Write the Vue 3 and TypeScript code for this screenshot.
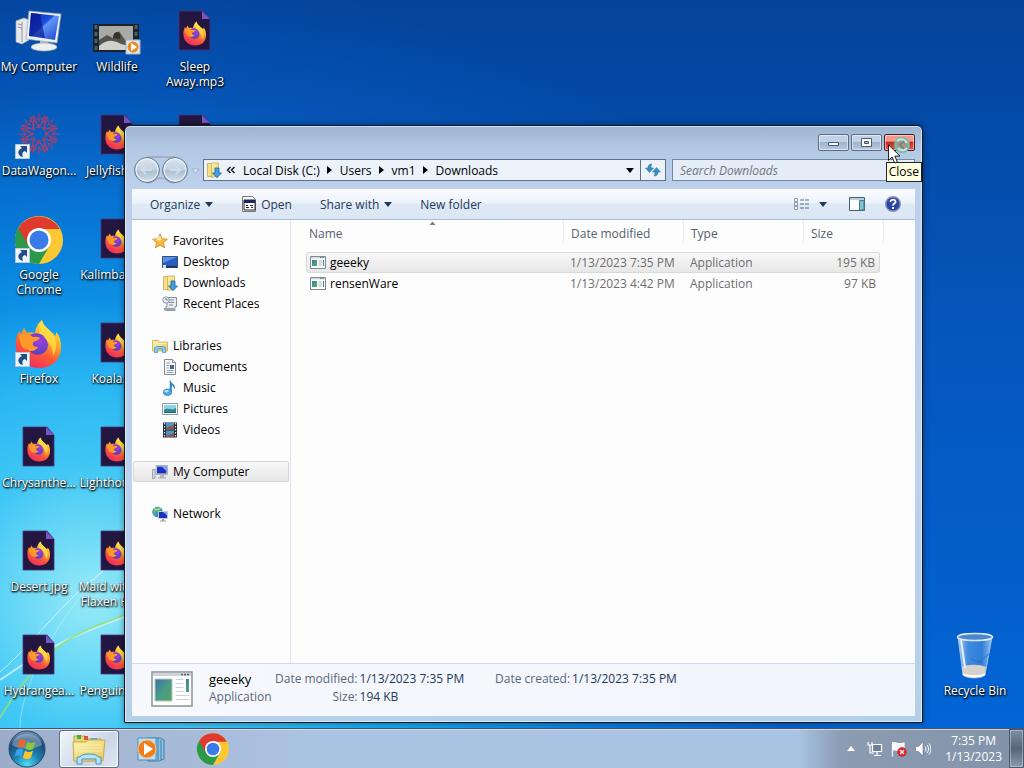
<script setup lang="ts">
import { ref } from 'vue'

interface Shortcut { label: string; icon: string; arrow?: boolean }
interface NavItem { label: string; icon: string }
interface NavGroup { head: NavItem; items: NavItem[]; selected?: boolean }
interface FileRow { name: string; modified: string; type: string; size: string }

const shortcuts: Shortcut[] = [
  { label: 'My Computer', icon: 'pc' },
  { label: 'DataWagon...', icon: 'rosette', arrow: true },
  { label: 'Google Chrome', icon: 'chrome-lg', arrow: true },
  { label: 'Firefox', icon: 'firefox', arrow: true },
  { label: 'Chrysanthe...', icon: 'ffdoc' },
  { label: 'Desert.jpg', icon: 'ffdoc' },
  { label: 'Hydrangea...', icon: 'ffdoc' },
  { label: 'Wildlife', icon: 'wildlife' },
  { label: 'Jellyfish.jpg', icon: 'ffdoc' },
  { label: 'Kalimba.mp3', icon: 'ffdoc' },
  { label: 'Koala.jpg', icon: 'ffdoc' },
  { label: 'Lighthouse....', icon: 'ffdoc' },
  { label: 'Maid with the Flaxen Hair...', icon: 'ffdoc' },
  { label: 'Penguins.jp...', icon: 'ffdoc' },
  { label: 'Sleep Away.mp3', icon: 'ffdoc' },
  { label: 'Tulips.jpg', icon: 'ffdoc' },
]

const groups: NavGroup[] = [
  {
    head: { label: 'Favorites', icon: 'star' },
    items: [
      { label: 'Desktop', icon: 'desktop' },
      { label: 'Downloads', icon: 'downloads' },
      { label: 'Recent Places', icon: 'recent' },
    ],
  },
  {
    head: { label: 'Libraries', icon: 'libraries' },
    items: [
      { label: 'Documents', icon: 'documents' },
      { label: 'Music', icon: 'music' },
      { label: 'Pictures', icon: 'pictures' },
      { label: 'Videos', icon: 'videos' },
    ],
  },
  { head: { label: 'My Computer', icon: 'pc-sm' }, items: [], selected: true },
  { head: { label: 'Network', icon: 'network' }, items: [] },
]

const files: FileRow[] = [
  { name: 'geeeky', modified: '1/13/2023 7:35 PM', type: 'Application', size: '195 KB' },
  { name: 'rensenWare', modified: '1/13/2023 4:42 PM', type: 'Application', size: '97 KB' },
]

const crumbs = ['Local Disk (C:)', 'Users', 'vm1', 'Downloads']
const selected = ref('geeeky')
const query = ref('')
const petals = [0, 45, 90, 135, 180, 225, 270, 315]
</script>

<template>
  <div class="screen">
    <svg class="defs" aria-hidden="true">
      <defs>
        <linearGradient id="gFire" x1="0.8" y1="0" x2="0.3" y2="1">
          <stop offset="0" stop-color="#fff04a" /><stop offset="0.35" stop-color="#ffb02a" />
          <stop offset="0.65" stop-color="#ff5a36" /><stop offset="1" stop-color="#ee2a62" />
        </linearGradient>
        <radialGradient id="gGlobe" cx="0.6" cy="0.3" r="0.8">
          <stop offset="0" stop-color="#a03be0" /><stop offset="1" stop-color="#4b45b8" />
        </radialGradient>
        <linearGradient id="gScreen" x1="0" y1="0" x2="1" y2="1">
          <stop offset="0" stop-color="#0a22b0" /><stop offset="0.45" stop-color="#1c4fe0" />
          <stop offset="0.5" stop-color="#5f97f5" /><stop offset="1" stop-color="#1c3fd0" />
        </linearGradient>
        <linearGradient id="gFolder" x1="0" y1="0" x2="1" y2="1">
          <stop offset="0" stop-color="#fdf3b0" /><stop offset="1" stop-color="#e8c95c" />
        </linearGradient>
        <radialGradient id="gOrb" cx="0.5" cy="0.95" r="0.95">
          <stop offset="0" stop-color="#4fe0f8" /><stop offset="0.4" stop-color="#1d7fae" />
          <stop offset="0.75" stop-color="#1a4a78" /><stop offset="1" stop-color="#7f9dbb" />
        </radialGradient>
        <linearGradient id="gBin" x1="0" y1="0" x2="1" y2="0">
          <stop offset="0" stop-color="#c5dcf3" stop-opacity="0.9" /><stop offset="0.3" stop-color="#5c9ce4" stop-opacity="0.7" />
          <stop offset="0.7" stop-color="#4188de" stop-opacity="0.7" /><stop offset="1" stop-color="#b5d4f3" stop-opacity="0.9" />
        </linearGradient>
        <linearGradient id="gNav" x1="0" y1="0" x2="0" y2="1">
          <stop offset="0" stop-color="#dde7f0" /><stop offset="0.45" stop-color="#c6d4e1" />
          <stop offset="0.55" stop-color="#adbfd1" /><stop offset="1" stop-color="#d5e3f0" />
        </linearGradient>
        <linearGradient id="gPic" x1="0" y1="0" x2="1" y2="1">
          <stop offset="0" stop-color="#3a70a8" /><stop offset="0.5" stop-color="#4b9a88" /><stop offset="1" stop-color="#57a562" />
        </linearGradient>
      </defs>

      <symbol id="firefox" viewBox="0 0 48 48">
        <path fill="url(#gFire)" d="M1 27C0 20 2 15 4 11l2 3 3-6 3 5c2-1 5-1 8 0 1-6 3-10 7-13 1 6 6 8 9 12 2 1 3 2 4 4 1-1 1-2 1-4 4 4 5 9 5 15 0 13-9 21-22 21S1 38 1 27z" />
        <path fill="#ffe04a" opacity="0.75" d="M27 0c1 6 6 8 9 12 6 7 7 16 2 24 0-9-4-15-11-18-4-5-4-13 0-18z" />
        <circle cx="23" cy="25" r="10" fill="url(#gGlobe)" />
        <path fill="#ff9a2a" d="M4 16c4-3 8-3 12-1 3 0 5 1 9 3-2 3-6 3-7 5-1 3 2 4 5 4-3 5-8 5-11 2-3 2-7-4-8-13z" />
        <path fill="#7b3fd0" d="M15 15c5-3 11-2 15 2-4-1-8 0-12 0z" />
      </symbol>
      <symbol id="ffdoc" viewBox="0 0 48 48">
        <path d="M8 3h24l7 8v31H8z" fill="#231640" stroke="#44357e" stroke-width="0.8" />
        <path d="M31 3l8 8h-8z" fill="#7b55c8" />
        <use href="#firefox" x="12" y="13" width="24" height="25" />
      </symbol>
      <symbol id="chrome" viewBox="0 0 48 48">
        <circle cx="24" cy="24" r="24" fill="#fcc934" />
        <path d="M24 24L3.200 12A24 24 0 0 0 24 48L34.400 30z" fill="#2a9a4a" />
        <path d="M24 13h20.800A24 24 0 0 0 3.200 12L13.600 30 24 24z" fill="#e03a2e" />
        <circle cx="24" cy="24" r="12" fill="#fff" />
        <circle cx="24" cy="24" r="9.500" fill="#3a7bea" />
      </symbol>
      <symbol id="chrome-lg" viewBox="0 0 48 48">
        <use href="#chrome" x="0" y="0" width="48" height="48" />
      </symbol>
      <symbol id="rosette" viewBox="0 0 48 48">
        <g fill="none" stroke="#c8385c" stroke-width="0.8" stroke-dasharray="4 1">
          <g v-for="a in petals" :key="a" :transform="`rotate(${a} 24 22)`">
            <path d="M24 14L15 5l9 3 9-3zM15 5l5 13M33 5l-5 13M24 1v9" />
            <circle cx="24" cy="9" r="4" />
          </g>
          <circle cx="24" cy="22" r="7" />
        </g>
      </symbol>
      <symbol id="pc" viewBox="0 0 48 48">
        <path d="M1 13l8-3 5 2v20l-7 4-6-2z" fill="#e6e8ea" stroke="#a8b0b8" stroke-width="0.700" />
        <path d="M3 16l4 1M3 19l4 1M7 14v20" stroke="#8f999f" stroke-width="1" fill="none" />
        <path d="M25 32h8l1 8h-9z" fill="#b8bfc6" />
        <ellipse cx="29" cy="39" rx="13" ry="4" fill="#eceff1" stroke="#a5adb5" stroke-width="0.7" />
        <path d="M14 3l32 3-4 29-31-4z" fill="#eef1f4" stroke="#9aa7b5" stroke-width="0.7" />
        <path d="M16 5l28 3-4 24-26-4z" fill="url(#gScreen)" />
        <path d="M16 5l9 1 5 24-16-2z" fill="#08158a" opacity="0.65" />
      </symbol>
      <symbol id="wildlife" viewBox="0 0 48 48">
        <path d="M0 16h46v28H0z" fill="#1b2228" />
        <path d="M6 18h34v24H6z" fill="#a9a9a6" />
        <path d="M6 42V32l8-5 6 3 6-7 6 9 8 3v7z" fill="#54544f" />
        <path d="M6 38c8-7 14-6 20-3s10 2 14 1v6H6z" fill="#d2d1cc" />
        <path d="M20 30c0-4 2-6 4-6s4 3 3 7z" fill="#34332f" />
        <path d="M3 17v26M43 17v26" stroke="#46606c" stroke-width="3" stroke-dasharray="4 3" />
        <path d="M33 32h14v14H33z" fill="#dde8f2" stroke="#9fb4c8" />
        <circle cx="40" cy="39" r="5.500" fill="#ef8a1f" />
        <path d="M38 35l6 4-6 4z" fill="#fff" />
      </symbol>
      <symbol id="bin" viewBox="0 0 48 48">
        <path d="M7 5l5 38c4 4 19 4 22 0l7-38z" fill="url(#gBin)" stroke="#a9cdf0" stroke-width="0.8" />
        <path d="M11 35c6-3 18-3 24 0l-1 8c-4 4-18 4-22 0z" fill="#d8d0cc" />
        <path d="M12 42c5 3 17 3 22 0" stroke="#fff" stroke-width="2" fill="none" />
        <path d="M38 22l-10 8-8-3" stroke="#2f6cba" stroke-width="1" fill="none" />
        <path d="M10 8l4 28" stroke="#e5f2fc" stroke-width="2" />
        <ellipse cx="24" cy="5" rx="17.500" ry="3.500" fill="#4a86c8" stroke="#dceaf5" stroke-width="1.500" />
      </symbol>
      <symbol id="star" viewBox="0 0 16 16">
        <path d="M8 .8l2.100 4.900 5.300.500-4 3.500 1.200 5.200L8 12.200l-4.600 2.700 1.200-5.200-4-3.500 5.300-.500z" fill="#fcb73a" stroke="#d08a28" stroke-width="0.8" />
        <path d="M8 2.500l1.500 4L8 8 4 7z" fill="#ffe9a8" />
      </symbol>
      <symbol id="desktop" viewBox="0 0 16 16">
        <path d="M.5 2.500h15v11H.5z" fill="#2a5cc0" stroke="#3a4f78" />
        <path d="M1 3h14L1 9z" fill="#5a92e8" />
        <path d="M1 12h14v1.500H1z" fill="#1d2f58" /><path d="M1 11h3v3H1z" fill="#cfe0f5" />
      </symbol>
      <symbol id="downloads" viewBox="0 0 16 16">
        <path d="M1.500 1.500h5v13h-5z" fill="#f6e08a" stroke="#c8a848" stroke-width="0.8" />
        <path d="M5.500 1h7v13l-7 1.500z" fill="url(#gFolder)" stroke="#cdae55" stroke-width="0.8" />
        <path d="M9 6h4v5h2.500l-4.500 4.700L6.500 11H9z" fill="#3f9fe0" stroke="#1f66a8" stroke-width="0.8" />
      </symbol>
      <symbol id="recent" viewBox="0 0 16 16">
        <path d="M5 1.500h9.500v9H13v4H4v-4h1z" fill="#e8ecef" stroke="#87919b" />
        <path d="M7 4h5M7 6.500h5M7 9h4" stroke="#7d8a96" />
        <path d="M2 12h10v2.500H2z" fill="#9aa5b0" />
        <circle cx="4" cy="4" r="3.200" fill="#f5f7f9" stroke="#8a98a8" /><path d="M4 2v2h2" stroke="#506070" fill="none" stroke-width="0.8" />
      </symbol>
      <symbol id="libraries" viewBox="0 0 16 16">
        <path d="M.5 2.500h6l1 1.500h8v9H.5z" fill="url(#gFolder)" stroke="#c9ab55" stroke-width="0.8" />
        <path d="M1 5.500h14" stroke="#f9f0c0" />
        <path d="M2.500 14.500V10c0-2 11-2 11 0v4.500h-3V11h-5v3.500z" fill="#8ccdf0" stroke="#4596c5" stroke-width="0.8" />
      </symbol>
      <symbol id="documents" viewBox="0 0 16 16">
        <path d="M2.500.5h8l3 3v12h-11z" fill="#fbfcfd" stroke="#7f8a95" />
        <path d="M10.500.5v3h3" fill="#d5dde5" stroke="#7f8a95" />
        <path d="M4.500 4h4M4.500 6.500h3M4.500 9h3M4.500 11.500h7M4.500 13.500h7" stroke="#8aa0b5" />
        <path d="M8 6h4v4H8z" fill="#4b6580" />
      </symbol>
      <symbol id="music" viewBox="0 0 16 16">
        <path d="M8 .5c1 3 5 3.500 4.500 8-1-2.500-2-3-3-3V12H8z" fill="#2f8fd0" stroke="#1a6aa8" stroke-width="0.500" />
        <ellipse cx="5.500" cy="12.200" rx="4.200" ry="3.200" fill="#49a8e2" stroke="#1f74b0" stroke-width="0.6" />
        <ellipse cx="4.500" cy="11.200" rx="2" ry="1.200" fill="#b4e0f8" />
      </symbol>
      <symbol id="pictures" viewBox="0 0 16 16">
        <path d="M.5 2.500h15v11H.5z" fill="#fff" stroke="#8a98a5" />
        <path d="M2 4h12v8H2z" fill="#8fd0f0" /><path d="M2 9c4-3 7 1 12-2v5H2z" fill="#2f8a80" /><path d="M2 11h12v1H2z" fill="#1f5f78" />
      </symbol>
      <symbol id="videos" viewBox="0 0 16 16">
        <path d="M1 .5h14v15H1z" fill="#222a35" /><path d="M4 1h8v6.500H4zM4 8.500h8V15H4z" fill="#4b93c8" />
        <path d="M4 6c3-3 5 0 8-4v5.500H4zM4 14c3-3 5 0 8-4v5H4z" fill="#8a5a48" />
        <path d="M2.500 1v14M13.500 1v14" stroke="#dfe8f0" stroke-width="1.200" stroke-dasharray="1.500 1.500" />
      </symbol>
      <symbol id="pc-sm" viewBox="0 0 16 16">
        <path d="M.5 5.500h2.500v9H.5z" fill="#d8dce0" stroke="#8a939c" stroke-width="0.8" />
        <path d="M4 1.500h11.500v9H4z" fill="#e8ebee" stroke="#8f9aa5" stroke-width="0.700" />
        <path d="M5 2.500h9.500v7H5z" fill="#1c2fc0" /><path d="M9.500 2.500h5V7z" fill="#7fa8f5" />
        <path d="M8 10.500h4V13h2v1.500H6V13h2z" fill="#b0b7be" />
      </symbol>
      <symbol id="network" viewBox="0 0 16 16">
        <circle cx="5.500" cy="6" r="5.300" fill="#3f8fd0" /><path d="M1 4c3-4 7-4 9-1-3 0-2 3-5 3S4 10 3 10 1 7 1 4z" fill="#58b868" />
        <path d="M2 2.500c2 2 5 1 7-1" stroke="#d5f0f5" fill="none" />
        <path d="M6.500 5.500h9v7h-9z" fill="#1c32b8" stroke="#c5cdd8" /><path d="M11 6h4v3.500z" fill="#7aa5f0" />
        <path d="M10 13h2v1.500h2v1H8v-1h2z" fill="#98a2b0" />
      </symbol>
      <symbol id="exe" viewBox="0 0 16 16">
        <path d="M.5 1.500h15v12H.5z" fill="#fcfdfd" stroke="#7f8b94" />
        <path d="M1 2h14v1.500H1z" fill="#d3dade" /><path d="M10 2.500h4" stroke="#68757f" stroke-dasharray="1 .6" />
        <path d="M2 5h5v6H2z" fill="url(#gPic)" /><path d="M8.500 6h3.500M8.500 8h3.500M8.500 10h3.500" stroke="#b4bdc3" /><path d="M13.500 5v6" stroke="#507f80" />
      </symbol>
      <symbol id="exe-lg" viewBox="0 0 42 36">
        <path d="M1 1h40v34H1z" fill="#fff" stroke="#8a9296" stroke-width="1.500" />
        <path d="M2 2h38v3H2z" fill="#cdd4d8" /><path d="M30 3.500h9" stroke="#566068" stroke-width="1.500" stroke-dasharray="2 1" />
        <path d="M4 8h17v22H4z" fill="url(#gPic)" stroke="#b7c5c5" />
        <path d="M24.500 8.500h8M24.500 12.500h8M24.500 16.500h8M24.500 20.500h8M24.500 24.500h14M24.500 28.500h14" stroke="#cbd2d6" />
        <path d="M35 8h3v13h-3z" fill="url(#gPic)" />
      </symbol>
      <symbol id="explorer" viewBox="0 0 36 32">
        <path d="M3 3h11l2 3h14v22H3z" fill="#e9d478" stroke="#c0a040" />
        <path d="M6 2h4v4H6z" fill="#4aa850" /><path d="M13 3h4v4h-4z" fill="#d8583c" /><path d="M20 5h6v3h-6z" fill="#6aa5d8" />
        <path d="M2 9h13l2-2h17l-2 21H3z" fill="url(#gFolder)" stroke="#c9ab4a" />
        <path d="M4 12h27M4 15h27M4 18h27" stroke="#f8eeb0" />
        <path d="M6 31V24h3c0-4 18-4 18 0h3v7h-5v-5H11v5z" fill="#b5e2f7" stroke="#4596c5" />
      </symbol>
      <symbol id="wmp" viewBox="0 0 30 28">
        <path d="M12 3h12l4 2v19l-5 2H12z" fill="#8cc4e6" stroke="#3f7fa8" />
        <path d="M22 3v22M25 5v20" stroke="#3f7fa8" /><path d="M2 3h18v22H2z" fill="#bfe0f2" stroke="#4a8fb8" />
        <circle cx="11" cy="14" r="9" fill="#ee7d1c" stroke="#f7c08a" /><path d="M8 8l9 6-9 6z" fill="#fff" />
      </symbol>
    </svg>

    <main class="desktop">
      <svg class="streaks" viewBox="0 0 260 260" fill="none" aria-hidden="true">
        <path d="M0 212C50 178 90 152 260 110" stroke="#dff8ff" stroke-width="2" opacity="0.7" />
        <path d="M0 204C40 170 70 120 130 85" stroke="#e8fbff" stroke-width="1" opacity="0.7" />
        <path d="M20 260C20 220 60 130 150 60" stroke="#c8f2ff" stroke-width="1" opacity="0.5" />
        <path d="M0 250C20 215 45 190 62 176C82 162 100 156 150 138" stroke="#8fe07a" stroke-width="2" opacity="0.85" />
      </svg>

      <section class="shortcuts" aria-label="Desktop">
        <a v-for="s in shortcuts" :key="s.label" href="#" class="shortcut">
          <span class="pic">
            <svg class="i48"><use :href="`#${s.icon}`" /></svg>
            <svg v-if="s.arrow" class="link-arrow" viewBox="0 0 15 15">
              <path d="M.5.5h14v14H.5z" fill="#eef4fa" stroke="#b5c8da" />
              <path d="M5 2h7v7l-2-2c-3 1-3 3-2 6C2 12 2 6 7 4z" fill="#1f4c8a" />
            </svg>
          </span>
          <span class="caption">{{ s.label }}</span>
        </a>
      </section>

      <a href="#" class="shortcut bin">
        <svg class="i48"><use href="#bin" /></svg>
        <span class="caption">Recycle Bin</span>
      </a>

      <section class="window" aria-label="Downloads">
        <header class="titlebar">
          <button class="wbtn" aria-label="Minimize"><svg viewBox="0 0 13 9"><path d="M1.500 4.500h10v3h-10z" fill="#fff" stroke="#4b5a70" /></svg></button>
          <button class="wbtn" aria-label="Maximize"><svg viewBox="0 0 13 9"><path d="M1.500.5h10v8h-10z" fill="#fff" stroke="#4b5a70" /><path d="M4.500 3.500h4v2h-4z" fill="#9fb4d0" stroke="#4b5a70" /></svg></button>
          <button class="wbtn close" aria-label="Close"></button>
        </header>

        <div class="navbar">
          <svg class="travel" viewBox="0 0 68 28" aria-label="Back and forward">
            <path d="M14 1h28M14 27c8 0 8-5 14-5s6 5 14 5" stroke="#8699ae" fill="none" />
            <circle cx="14" cy="14" r="12.500" fill="url(#gNav)" stroke="#67798d" />
            <circle cx="42" cy="14" r="12.500" fill="url(#gNav)" stroke="#67798d" />
            <circle cx="14" cy="14" r="11" fill="none" stroke="#edf5fb" /><circle cx="42" cy="14" r="11" fill="none" stroke="#edf5fb" />
            <path d="M19 14H9l4-4M9 14l4 4M37 14h10l-4-4M47 14l-4 4" stroke="#d0deeb" stroke-width="2" fill="none" />
            <path d="M59 13h7l-3.500 4z" fill="#dbe8f5" stroke="#94a8be" stroke-width="0.800" />
          </svg>
          <div class="address">
            <svg class="i16 lead"><use href="#downloads" /></svg>
            <svg class="chev" viewBox="0 0 10 8"><path d="M4.500 1l-3 3 3 3M8.500 1l-3 3 3 3" fill="none" stroke="#111" stroke-width="1.400" /></svg>
            <template v-for="(c, i) in crumbs" :key="c">
              <svg v-if="i > 0" class="sep" viewBox="0 0 5 8"><path d="M0 0l5 4-5 4z" /></svg>
              <button class="crumb">{{ c }}</button>
            </template>
            <button class="drop" aria-label="Previous locations"><svg viewBox="0 0 8 5"><path d="M0 0h8L4 5z" /></svg></button>
            <button class="refresh" aria-label="Refresh">
              <svg viewBox="0 0 16 16"><path d="M7 2C4 2 3 3.500 3 6H.5L4.500 10.500 8.500 6H6c0-2 0-3 1-4zM9 14c3 0 4-1.500 4-4h2.500L11.500 5.500 7.500 10H10c0 2 0 3-1 4z" fill="#3592c4" stroke="#256a9a" stroke-width="0.500" /></svg>
            </button>
          </div>
          <input v-model="query" class="search" type="search" aria-label="Search Downloads" placeholder="Search Downloads">
        </div>

        <div class="body">
          <div class="toolbar">
            <button class="tool organize">Organize<svg class="tri" viewBox="0 0 8 5"><path d="M0 0h8L4 5z" /></svg></button>
            <button class="tool open">
              <svg class="i16" viewBox="0 0 16 16"><path d="M1.500.5h10l3 3v12h-13z" fill="#fff" stroke="#777" /><path d="M3 4h11v10H3z" fill="#fff" stroke="#222" /><path d="M3 4h11v3H3z" fill="#1b2460" /><path d="M5 9.500h2M9 9.500h3M5 11.500h3M10 11.500h2" stroke="#222" /></svg>Open
            </button>
            <button class="tool share">Share with<svg class="tri" viewBox="0 0 8 5"><path d="M0 0h8L4 5z" /></svg></button>
            <button class="tool">New folder</button>
            <span class="grow"></span>
            <button class="tool view" aria-label="Change your view">
              <svg class="i16" viewBox="0 0 16 16"><path d="M.5 2.500h3v3h-3zM.5 6.500h3v3h-3zM.5 10.500h3v3h-3z" fill="#fff" stroke="#8b98ac" /><path d="M6 4h10M6 8h10M6 12h10" stroke="#5d6c84" stroke-dasharray="4 1" /></svg>
              <svg class="tri" viewBox="0 0 8 5"><path d="M0 0h8L4 5z" /></svg>
            </button>
            <button class="tool" aria-label="Show the preview pane">
              <svg class="i16" viewBox="0 0 16 16"><path d="M.5 1.500h15v13H.5z" fill="#fff" stroke="#3f6078" /><path d="M1 2h14v2H1z" fill="#b8d0dc" /><path d="M10.500 4.500h4.500v9.500h-4.500z" fill="#7fc4cc" stroke="#43808c" /></svg>
            </button>
            <button class="tool" aria-label="Get help">
              <svg class="i16" viewBox="0 0 16 16"><circle cx="8" cy="8" r="7.300" fill="#2c46a4" stroke="#8a95b8" stroke-width="1.400" /><path d="M5.500 6c0-3.500 5.500-3 5 0-.3 1.600-2.500 1.500-2.500 3.500M8 11v2" fill="none" stroke="#fff" stroke-width="1.800" /></svg>
            </button>
          </div>

          <div class="panes">
            <nav class="tree" aria-label="Places">
              <ul v-for="g in groups" :key="g.head.label">
                <li><a href="#" class="place" :class="{ current: g.selected }"><svg class="i16"><use :href="`#${g.head.icon}`" /></svg>{{ g.head.label }}</a></li>
                <li v-for="n in g.items" :key="n.label"><a href="#" class="place child"><svg class="i16"><use :href="`#${n.icon}`" /></svg>{{ n.label }}</a></li>
              </ul>
            </nav>

            <div class="list">
              <table>
                <thead>
                  <tr>
                    <th class="c-name" scope="col" aria-sort="ascending">Name<svg class="sort" viewBox="0 0 7 4"><path d="M.5 4L3.500.5l3 3.500z" fill="#6f8294" /></svg></th>
                    <th class="c-mid" scope="col">Date modified</th>
                    <th class="c-mid" scope="col">Type</th>
                    <th class="c-size" scope="col">Size</th>
                  </tr>
                </thead>
                <tbody>
                  <tr v-for="f in files" :key="f.name" :class="{ on: f.name === selected }" @click="selected = f.name">
                    <td class="fname"><svg class="i16"><use href="#exe" /></svg>{{ f.name }}</td>
                    <td>{{ f.modified }}</td>
                    <td>{{ f.type }}</td>
                    <td class="fsize">{{ f.size }}</td>
                  </tr>
                </tbody>
              </table>
            </div>
          </div>

          <footer class="details">
            <svg class="thumb"><use href="#exe-lg" /></svg>
            <div class="what"><strong>geeeky</strong><span>Application</span></div>
            <dl>
              <dt>Date modified:</dt><dd>1/13/2023 7:35 PM</dd>
              <dt>Size:</dt><dd>194 KB</dd>
            </dl>
            <dl>
              <dt>Date created:</dt><dd>1/13/2023 7:35 PM</dd>
            </dl>
          </footer>
        </div>

        <svg class="busy" viewBox="0 0 18 18" aria-hidden="true">
          <circle cx="9" cy="9" r="6.500" fill="#9bb8ac" fill-opacity="0.7" stroke="#74b8a8" stroke-width="3" />
          <path d="M4 5c3-3 8-2 10 2M14 12c-2 3-7 3-9 0" stroke="#c8eadf" stroke-width="2" fill="none" />
          <path d="M11 5L7 9l4 4" stroke="#5e8a88" stroke-width="1.500" fill="none" />
        </svg>
        <div class="tip" role="tooltip">Close</div>
        <svg class="cursor" viewBox="0 0 13 20" aria-hidden="true"><path d="M.5.800v15.700l3.700-3.500 2.500 6 2.600-1.100-2.500-5.800h5.200z" fill="#fff" stroke="#111" stroke-width="0.900" /></svg>
      </section>
    </main>

    <footer class="taskbar">
      <button class="start" aria-label="Start">
        <svg viewBox="0 0 38 38">
          <circle cx="19" cy="19" r="18" fill="url(#gOrb)" stroke="#25486b" />
          <path d="M4 15C7 0 31 0 34 15c-9 5-21 5-30 0z" fill="#fff" opacity="0.3" />
          <path d="M11 11c3-2 5-2 7 0l-2 7c-2-2-5-2-7 0z" fill="#f0642c" />
          <path d="M19.500 11.500c3 2 5 2 8 0l-2 7c-3 2-5 2-8 0z" fill="#8cc63a" />
          <path d="M8.500 20c3-2 5-2 7 0l-2 7c-2-2-5-2-7 0z" fill="#3aa0e8" />
          <path d="M17 20.500c3 2 5 2 8 0l-2 7c-3 2-5 2-8 0z" fill="#fcc52c" />
        </svg>
      </button>
      <button class="task active" aria-label="Windows Explorer"><svg class="t36"><use href="#explorer" /></svg></button>
      <button class="task" aria-label="Windows Media Player"><svg class="t30"><use href="#wmp" /></svg></button>
      <button class="task" aria-label="Google Chrome"><svg class="t32"><use href="#chrome" /></svg></button>
      <span class="grow"></span>
      <div class="tray">
        <button class="up" aria-label="Show hidden icons"><svg viewBox="0 0 8 5"><path d="M0 5h8L4 0z" fill="#fff" /></svg></button>
        <button aria-label="Network"><svg class="i16" viewBox="0 0 16 16"><path d="M5.500 3.500h9v7h-9z" fill="#6f8096" stroke="#fff" stroke-width="1.200" /><path d="M10 11v3M7 14.500h7M1 1v3h4V1M3 4v8h4" stroke="#fff" fill="none" stroke-width="1.200" /></svg></button>
        <button aria-label="Action Center"><svg class="i16" viewBox="0 0 16 16"><path d="M1.500 1v14.500M2 2c4-1 5 2 11 0v7c-5 2-7-1-11 0z" fill="#f5f7fa" stroke="#fff" stroke-width="1.200" /><circle cx="11" cy="11" r="4.700" fill="#d8222c" /><path d="M9 9l4 4M13 9l-4 4" stroke="#fff" stroke-width="1.300" /></svg></button>
        <button aria-label="Volume"><svg class="i16" viewBox="0 0 16 16"><path d="M.5 5.500h3L8 1v14l-4.500-4.500h-3z" fill="#fff" stroke="#56657a" stroke-width="0.500" /><path d="M10 5.500c1.200 1.500 1.200 3.500 0 5M12 4c2 2.500 2 5.500 0 8M14 2.500c2.500 3.500 2.500 7.500 0 11" stroke="#fff" fill="none" /></svg></button>
      </div>
      <time class="clock"><span>7:35 PM</span><span>1/13/2023</span></time>
      <button class="peek" aria-label="Show desktop"></button>
    </footer>
  </div>
</template>

<style>
html, body { margin: 0; height: 100%; overflow: hidden; }
</style>

<style scoped>
.screen {
  height: 100vh;
  display: flex;
  flex-direction: column;
  font: 12px/15px "Open Sans", "Noto Sans", sans-serif;
  color: #000;
  background:
    radial-gradient(circle 300px at 9% 78%, rgba(165, 240, 248, 0.9), rgba(90, 215, 248, 0.6) 45%, transparent),
    radial-gradient(ellipse 860px 680px at 8% 84%, #20b6f2 0%, #14a8ef 38%, rgba(8, 130, 224, 0.8) 62%, rgba(6, 100, 205, 0.4) 82%, transparent 100%),
    linear-gradient(180deg, #04439b 0%, #0557bd 45%, #0266d8 100%);
}
.defs { position: absolute; width: 0; height: 0; }
button { font: inherit; color: inherit; background: none; border: 0; padding: 0; margin: 0; }
a { color: inherit; text-decoration: none; }
svg { display: block; flex: none; }
.i16 { width: 16px; height: 16px; }
.i48 { width: 48px; height: 48px; }
.grow { flex: 1; }

.desktop { position: relative; flex: 1; min-height: 0; }
.streaks { position: absolute; left: 0; bottom: 0; width: 260px; height: 260px; }
.shortcuts {
  position: relative;
  display: grid;
  grid-auto-flow: column;
  grid-template-rows: repeat(7, 104px);
  grid-auto-columns: 78px;
  width: max-content;
}
.shortcut {
  display: flex;
  flex-direction: column;
  align-items: center;
  gap: 3px;
  padding: 8px 0 0;
  color: #fff;
  text-align: center;
  text-shadow: 1px 1px 2px #000, 0 1px 2px #000;
}
.pic { position: relative; }
.link-arrow { position: absolute; left: 0; bottom: 1px; width: 15px; height: 15px; }
.caption { max-width: 78px; }
.bin { position: absolute; right: 10px; bottom: 30px; width: 78px; }

.window {
  position: absolute;
  inset: 125px 101px 5px 124px;
  display: flex;
  flex-direction: column;
  padding: 0 7px 6px;
  border: 1px solid #10161f;
  border-radius: 6px 6px 0 0;
  background: linear-gradient(180deg, #9db5d0 0, #b3c9e4 24px, #bcd0ec 60px, #bcd1ec 60%, #b4d0e8 100%);
  box-shadow: inset 0 0 0 1px rgba(235, 245, 255, 0.7), 0 0 6px rgba(0, 0, 0, 0.4);
}
.titlebar { display: flex; justify-content: flex-end; gap: 2px; padding: 8px 0 0; height: 23px; }
.wbtn {
  width: 31px;
  height: 17px;
  display: flex;
  align-items: center;
  justify-content: center;
  border: 1px solid #5c6c84;
  border-radius: 2px;
  background: linear-gradient(180deg, #c0d1e8 0 45%, #a0b3cc 50%, #b7cae4);
  box-shadow: inset 0 0 0 1px rgba(255, 255, 255, 0.5);
}
.wbtn svg { width: 13px; height: 9px; }
.close { border-color: #4e1a20; background: linear-gradient(180deg, #f09a90 0 40%, #c82a20 50%, #e8574a); }

.navbar { display: flex; align-items: center; height: 26px; padding-left: 1px; margin-bottom: 6px; }
.travel { width: 68px; height: 28px; margin-right: 2px; }
.address {
  flex: 1;
  display: flex;
  align-items: center;
  height: 20px;
  border: 1px solid #5d7288;
  background: #ebf2fa;
}
.lead { margin: 0 4px 0 2px; }
.chev { width: 10px; height: 8px; margin-right: 7px; }
.sep { width: 5px; height: 8px; margin: 0 8px 0 7px; }
.drop { margin-left: auto; padding: 0 6px; }
.drop svg { width: 8px; height: 5px; }
.refresh { align-self: stretch; width: 25px; border-left: 1px solid #5d7288; padding-left: 4px; }
.refresh svg { width: 16px; height: 16px; }
.search {
  width: 243px;
  height: 22px;
  box-sizing: border-box;
  margin: 0 0 0 6px;
  padding: 0 7px;
  border: 1px solid #7389a2;
  border-radius: 0;
  background: #e4edf8;
  font: inherit;
  appearance: none;
  outline: 0;
}
.search::placeholder { color: #71767e; font-style: italic; opacity: 1; }

.body { flex: 1; min-height: 0; display: flex; flex-direction: column; background: #fdfdfe; }
.toolbar {
  display: flex;
  align-items: center;
  height: 30px;
  padding: 0 14px 0 18px;
  border-bottom: 1px solid #a9bdd6;
  background: linear-gradient(180deg, #fafcfe 0%, #edf3fb 45%, #dfe8f5 52%, #dce7f5 100%);
  color: #1e395b;
}
.tool { display: flex; align-items: center; white-space: nowrap; }
.tri { width: 8px; height: 5px; margin-left: 5px; fill: #1e395b; }
.organize, .open, .share { margin-right: 28px; }
.open { gap: 4px; }
.view { gap: 4px; margin-right: 2px; }
.toolbar > .tool:nth-last-child(-n+2) { margin-left: 20px; }

.panes { flex: 1; min-height: 0; display: flex; }
.tree { width: 158px; padding-top: 10px; border-right: 1px solid #dbe6f3; }
.tree ul { list-style: none; margin: 0 0 21px; padding: 0; }
.place {
  display: flex;
  align-items: center;
  gap: 5px;
  height: 21px;
  box-sizing: border-box;
  padding-left: 20px;
}
.child { padding-left: 30px; }
.current {
  margin: 0 1px;
  padding-left: 18px;
  border: 1px solid #d5d5d7;
  border-radius: 2px;
  background: linear-gradient(180deg, #f8f8f8, #e6e6e7);
}
.list { flex: 1; min-width: 0; padding-left: 15px; }
table { border-collapse: separate; border-spacing: 0; table-layout: fixed; width: 574px; }
th, td { padding: 0; font-weight: normal; text-align: left; white-space: nowrap; }
th { position: relative; height: 26px; padding-left: 7px; color: #56606c; }
th::after { content: ""; position: absolute; top: 0; right: 0; width: 1px; height: 24px; background: #e4ebf3; }
.c-name { width: 255px; padding-left: 3px; }
.c-mid { width: 113px; }
.c-size::after { right: -4px; }
.sort { position: absolute; left: 123px; top: 1px; width: 7px; height: 4px; }
thead::after { content: ""; display: block; height: 6px; }
td { height: 19px; padding-left: 6px; border: 1px solid transparent; border-width: 1px 0; color: #6d6d6d; }
.on td { border-color: #d9d9d9; background: linear-gradient(180deg, #f8f8f8, #e7e7e7); }
.on td:first-child { border-left: 1px solid #d9d9d9; border-radius: 3px 0 0 3px; }
.on td:last-child { border-right: 1px solid #d9d9d9; border-radius: 0 3px 3px 0; }
td.fname { display: flex; align-items: center; gap: 4px; padding-left: 3px; border-left-width: 1px; color: #000; }
td.fsize { text-align: right; padding-right: 4px; }

.details {
  display: flex;
  height: 53px;
  box-sizing: border-box;
  padding: 6px 19px 0;
  border-top: 1px solid #ccd9ea;
  background: linear-gradient(90deg, #f6f8fc, #f1f5fc);
  line-height: 18px;
  color: #5a6779;
}
.thumb { width: 42px; height: 36px; margin: 1px 16px 0 0; }
.what { display: flex; flex-direction: column; width: 66px; }
.what strong { font-weight: normal; font-size: 13px; color: #000; }
.details dl {
  display: grid;
  grid-template-columns: max-content max-content;
  grid-auto-rows: 18px;
  column-gap: 2px;
  width: 220px;
  margin: 0;
}
.details dt { text-align: right; }
.details dd { margin: 0; color: #1e395b; }

.busy { position: absolute; right: 11px; top: 10px; width: 18px; height: 18px; }
.tip {
  position: absolute;
  right: 0;
  top: 36px;
  padding: 1px 2px;
  border: 1px solid #222;
  background: #ffffe1;
  line-height: 16px;
}
.cursor { position: absolute; right: 21px; top: 18px; width: 13px; height: 20px; }

.taskbar {
  display: flex;
  align-items: center;
  height: 39px;
  border-top: 1px solid #46566c;
  color: #fff;
  background: linear-gradient(90deg, #9cadc9 0, #a5b7d3 12%, #abc3e2 30%, #a9c3e2 78%, #8c9cb3 82%, #8292a9 100%);
  box-shadow: inset 0 1px 0 rgba(225, 236, 248, 0.7);
}
.start { margin: 0 13px 0 8px; }
.start svg { width: 38px; height: 38px; }
.task { display: flex; align-items: center; justify-content: center; width: 60px; height: 38px; margin-right: 2px; }
.active {
  box-sizing: border-box;
  border: 1px solid #5b6c84;
  border-radius: 3px;
  background: linear-gradient(135deg, #f2f6fb, #cbd7e7 60%, #dfe7f2);
  box-shadow: inset 0 0 0 1px rgba(255, 255, 255, 0.8);
}
.t36 { width: 36px; height: 32px; }
.t30 { width: 30px; height: 28px; }
.t32 { width: 32px; height: 32px; }
.tray { display: flex; align-items: center; gap: 8px; margin-right: 14px; }
.up { margin-right: 4px; }
.up svg { width: 8px; height: 5px; }
.clock { display: flex; flex-direction: column; align-items: center; line-height: 16px; margin-right: 7px; }
.peek {
  width: 15px;
  height: 39px;
  box-sizing: border-box;
  border: 1px solid #4d5b6e;
  background: linear-gradient(180deg, #8090a4, #56657a 50%, #8b9aaf);
  box-shadow: inset 0 0 0 1px rgba(220, 230, 242, 0.4);
}
</style>
